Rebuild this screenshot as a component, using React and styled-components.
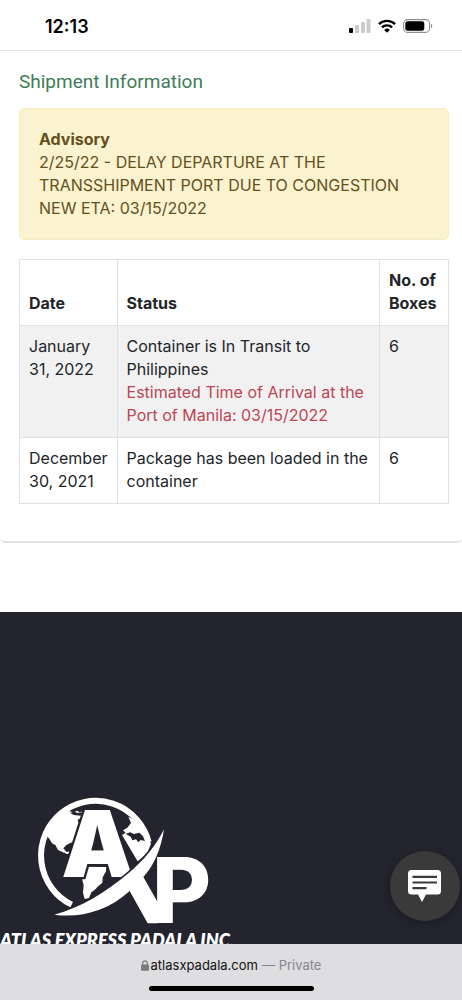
import React from 'react';
import styled, { createGlobalStyle } from 'styled-components';

const GlobalStyle = createGlobalStyle`
    *{
        box-sizing:border-box;
    }

    body{
        margin:0;
        background:#fff;
        color:#212529;
        font-family:Inter, "Liberation Sans", sans-serif;
        font-size:16px;
        line-height:23px;
    }
`;

const Screen = styled.div`
    display:flex;
    flex-direction:column;
    height:100vh;
`;

const StatusBar = styled.header`
    display:flex;
    flex:none;
    align-items:center;
    justify-content:space-between;
    height:51px;
    padding:2px 29px 0 45px;
    border-bottom:1px solid #e3e3e5;
`;

const Clock = styled.time`
    color:#000;
    font-size:18px;
    font-weight:600;
`;

const StatusIcons = styled.div`
    display:flex;
    align-items:center;
    gap:7px;
`;

const Page = styled.main`
    display:flex;
    flex:1;
    flex-direction:column;
    min-height:0;
    overflow:hidden;
`;

const Card = styled.section`
    flex:none;
    padding:19px 13px 37px 19px;
    border-bottom:2px solid #e1e2e4;
    border-radius:0 0 5px 5px;
`;

const CardTitle = styled.h2`
    margin:0 0 15px;
    color:#417c59;
    font-family:Roboto, sans-serif;
    font-size:19px;
    font-weight:400;
    line-height:23px;
`;

const Alert = styled.div`
    margin-bottom:19px;
    padding:19px;
    border:1px solid #faecc4;
    border-radius:5px;
    background:#fbf2d0;
    color:#64501b;
`;

const AlertText = styled.p`
    margin:0;
`;

const Table = styled.table`
    width:100%;
    border-collapse:collapse;
`;

const Row = styled.tr`
    background:${({$striped}) => ($striped ? '#f1f1f2' : 'transparent')};
`;

const HeadCell = styled.th`
    width:${({$width}) => $width || 'auto'};
    padding:9px 9px 10px;
    border:1px solid #dee2e6;
    font-weight:700;
    text-align:left;
    vertical-align:bottom;
`;

const Cell = styled.td`
    padding:9px 9px 10px;
    border:1px solid #dee2e6;
    vertical-align:top;
`;

const Eta = styled.div`
    color:#bb4752;
`;

const Footer = styled.footer`
    flex:1;
    min-height:0;
    margin-top:69px;
    padding-top:183px;
    overflow:hidden;
    background:#24242f;
    color:#fff;
`;

const Brand = styled.div`
    svg{
        display:block;
        margin-left:35px;
        overflow:visible;
    }
`;

const BrandName = styled.p`
    margin:4px 0 0;
    font-family:Lato, sans-serif;
    font-size:18px;
    font-style:italic;
    font-weight:800;
    line-height:23px;
    white-space:nowrap;
`;

const ChatButton = styled.button`
    position:fixed;
    right:2px;
    bottom:79px;
    display:flex;
    align-items:center;
    justify-content:center;
    width:70px;
    height:70px;
    padding:0;
    border:0;
    border-radius:50%;
    background:#3a3a3a;
    box-shadow:0 2px 10px rgba(0,0,0,0.3);
    cursor:pointer;
`;

const BrowserBar = styled.nav`
    display:flex;
    flex:none;
    flex-direction:column;
    align-items:center;
    justify-content:space-between;
    height:56px;
    padding:10px 0 9px;
    background:#dedee1;
`;

const Address = styled.div`
    display:flex;
    align-items:center;
    gap:2px;
    color:#86868b;
    font-size:13px;
    line-height:23px;
`;

const Domain = styled.span`
    margin-right:2px;
    color:#111;
`;

const HomeIndicator = styled.div`
    width:165px;
    height:5px;
    border-radius:3px;
    background:#000;
`;

const shipments = [
    {
        date:'January 31, 2022',
        status:'Container is In Transit to Philippines',
        eta:'Estimated Time of Arrival at the Port of Manila: 03/15/2022',
        boxes:6
    },
    {
        date:'December 30, 2021',
        status:'Package has been loaded in the container',
        boxes:6
    }
];

const SignalIcon = () => (
    <svg width="22" height="14" viewBox="0 0 22 14" aria-hidden="true">
        <rect x="0" y="9" width="4" height="5" rx="1" fill="#000" />
        <rect x="6" y="6" width="4" height="8" rx="1" fill="#cbcbcb" />
        <rect x="12" y="3" width="4" height="11" rx="1" fill="#cbcbcb" />
        <rect x="17.5" y="0" width="4" height="14" rx="1" fill="#cbcbcb" />
    </svg>
);

const WifiIcon = () => (
    <svg width="18" height="14" viewBox="0 0 18 14" aria-hidden="true" fill="none" stroke="#000" strokeWidth="2.3">
        <path d="M.9 5.1a11.6 11.6 0 0 1 16.2 0" />
        <path d="M3.9 8.4a7.3 7.3 0 0 1 10.2 0" />
        <path d="M6.2 10.9a4 4 0 0 1 5.6 0L9 13.7Z" fill="#000" stroke="none" />
    </svg>
);

const BatteryIcon = () => (
    <svg width="30" height="14" viewBox="0 0 30 14" aria-hidden="true">
        <rect x=".6" y=".6" width="26" height="12.8" rx="4" fill="none" stroke="#8f8f8f" strokeWidth="1.1" />
        <rect x="2.3" y="2.2" width="19" height="9.6" rx="2.4" fill="#000" />
        <path d="M28 4.8c1.7.5 1.7 3.9 0 4.4Z" fill="#8f8f8f" />
    </svg>
);

const LockIcon = () => (
    <svg width="8" height="11" viewBox="0 0 8 11" aria-hidden="true">
        <rect x="0" y="4.6" width="8" height="6.2" rx="1" fill="#7c7c80" />
        <path d="M1.8 5V3a2.2 2.2 0 0 1 4.4 0v2" fill="none" stroke="#7c7c80" strokeWidth="1.2" />
    </svg>
);

const ChatIcon = () => (
    <svg width="34" height="34" viewBox="0 0 34 34" aria-hidden="true">
        <path d="M3.5 1h26A3.5 3.5 0 0 1 33 4.5V22a3.5 3.5 0 0 1-3.5 3.5H18L14 33l-4-7.500H3.500A3.500 3.500 0 0 1 0 22V4.500A3.500 3.500 0 0 1 3.500 1Z" fill="#fff" />
        <path d="M4.500 7.800H29M4.500 13.500H29M4.500 19.200H18.500" stroke="#3a3a3a" strokeWidth="2.200" />
    </svg>
);

const Logo = () => (
    <svg width="175" height="130" viewBox="105 45 525 390" role="img" aria-label="Atlas Express Padala">
        <path d="M215 374A164 164 0 1 1 446 186" fill="none" stroke="#fff" strokeWidth="18" />
        {/* continents */}
        <path d="M142 170C151 132 173 105 205 93L221 97 231 92 239 97 250 93 261 97 276 93 279 104 263 125 252 151 240 160 222 187 212 188 199 195 190 205 200 216 212 213 213 222 201 222 187 216 174 210 166 195 156 190 148 176Z" fill="#fff" />
        <path d="M211 99L224 94 231 99 247 97 242 107 221 105ZM233 119L249 111 251 121 244 134 236 129Z" fill="#24242f" />
        <path d="M244 279L248 260 319 261 318 274 308 292 307 308 293 320 283 331 274 337 267 354 254 357 249 338 251 315 246 297Z" fill="#fff" />
        <path d="M385 110C417 124 441 153 453 191L441 221 413 244 366 165 377 158 369 151 382 143 393 129Z" fill="#fff" />
        <path d="M377 161L391 157 401 162 418 158 429 169 435 183 422 180 415 187 408 178 397 181 392 170Z" fill="#24242f" />
        <text x="184" y="291" fill="#fff" stroke="#24242f" strokeWidth="14" paintOrder="stroke" fontFamily="Inter" fontSize="276" fontWeight="900">A</text>
        {/* swoosh and the leg under it */}
        <path d="M492 148C467 198 431 242 385 280C318 337 239 385 163 404C238 414 320 396 389 333L443 430H474V368L430 291C461 259 483 207 492 148Z" fill="#fff" stroke="#24242f" strokeWidth="10" paintOrder="stroke" />
        <text x="456" y="430" fill="#fff" fontFamily="Inter" fontSize="272" fontWeight="800">P</text>
    </svg>
);

const App = () => {
    return (
        <Screen>
            <GlobalStyle />
            <StatusBar>
                <Clock>12:13</Clock>
                <StatusIcons>
                    <SignalIcon />
                    <WifiIcon />
                    <BatteryIcon />
                </StatusIcons>
            </StatusBar>
            <Page>
                <Card>
                    <CardTitle>Shipment Information</CardTitle>
                    <Alert>
                        <strong>Advisory</strong>
                        <AlertText>2/25/22 - DELAY DEPARTURE AT THE TRANSSHIPMENT PORT DUE TO CONGESTION</AlertText>
                        <AlertText>NEW ETA: 03/15/2022</AlertText>
                    </Alert>
                    <Table>
                        <thead>
                            <Row>
                                <HeadCell $width="97px">Date</HeadCell>
                                <HeadCell>Status</HeadCell>
                                <HeadCell $width="69px">No. of Boxes</HeadCell>
                            </Row>
                        </thead>
                        <tbody>
                            {shipments.map((item,i)=>(
                                <Row key={i} $striped={i % 2 === 0}>
                                    <Cell>{item.date}</Cell>
                                    <Cell>
                                        {item.status}
                                        {item.eta && <Eta>{item.eta}</Eta>}
                                    </Cell>
                                    <Cell>{item.boxes}</Cell>
                                </Row>
                            ))}
                        </tbody>
                    </Table>
                </Card>
                <Footer>
                    <Brand>
                        <Logo />
                        <BrandName>ATLAS EXPRESS PADALA INC.</BrandName>
                    </Brand>
                </Footer>
            </Page>
            <ChatButton aria-label="Open chat">
                <ChatIcon />
            </ChatButton>
            <BrowserBar>
                <Address>
                    <LockIcon />
                    <Domain>atlasxpadala.com</Domain>
                    <span>— Private</span>
                </Address>
                <HomeIndicator />
            </BrowserBar>
        </Screen>
    )
}

export default App;
